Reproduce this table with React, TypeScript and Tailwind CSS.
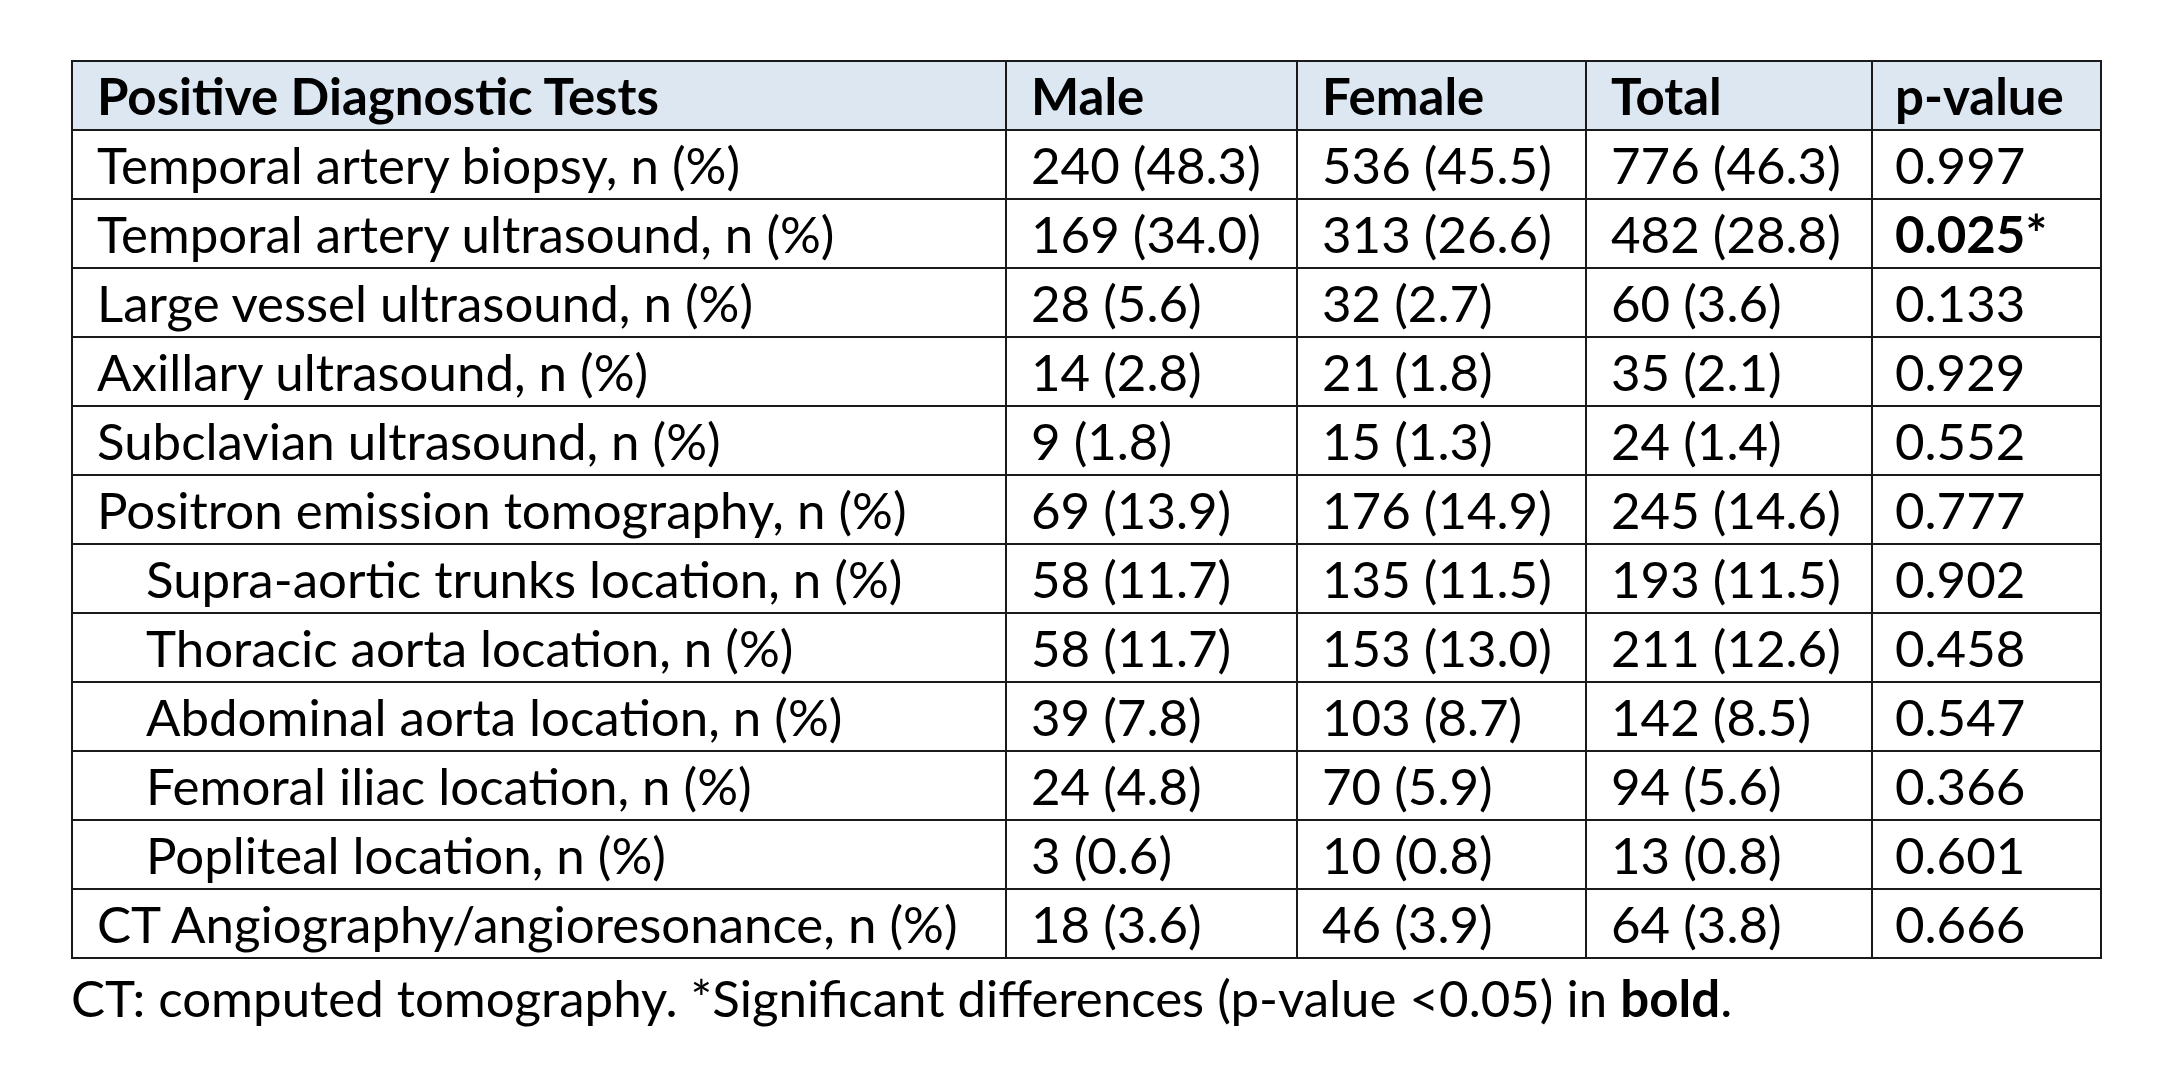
import React from "react";

type Row = { label: string; indent?: boolean; male: string; female: string; total: string; p: string; bold?: boolean };

const rows: Row[] = [
  { label: "Temporal artery biopsy, n (%)", male: "240 (48.3)", female: "536 (45.5)", total: "776 (46.3)", p: "0.997" },
  { label: "Temporal artery ultrasound, n (%)", male: "169 (34.0)", female: "313 (26.6)", total: "482 (28.8)", p: "0.025*", bold: true },
  { label: "Large vessel ultrasound, n (%)", male: "28 (5.6)", female: "32 (2.7)", total: "60 (3.6)", p: "0.133" },
  { label: "Axillary ultrasound, n (%)", male: "14 (2.8)", female: "21 (1.8)", total: "35 (2.1)", p: "0.929" },
  { label: "Subclavian ultrasound, n (%)", male: "9 (1.8)", female: "15 (1.3)", total: "24 (1.4)", p: "0.552" },
  { label: "Positron emission tomography, n (%)", male: "69 (13.9)", female: "176 (14.9)", total: "245 (14.6)", p: "0.777" },
  { label: "Supra-aortic trunks location, n (%)", indent: true, male: "58 (11.7)", female: "135 (11.5)", total: "193 (11.5)", p: "0.902" },
  { label: "Thoracic aorta location, n (%)", indent: true, male: "58 (11.7)", female: "153 (13.0)", total: "211 (12.6)", p: "0.458" },
  { label: "Abdominal aorta location, n (%)", indent: true, male: "39 (7.8)", female: "103 (8.7)", total: "142 (8.5)", p: "0.547" },
  { label: "Femoral iliac location, n (%)", indent: true, male: "24 (4.8)", female: "70 (5.9)", total: "94 (5.6)", p: "0.366" },
  { label: "Popliteal location, n (%)", indent: true, male: "3 (0.6)", female: "10 (0.8)", total: "13 (0.8)", p: "0.601" },
  { label: "CT Angiography/angioresonance, n (%)", male: "18 (3.6)", female: "46 (3.9)", total: "64 (3.8)", p: "0.666" },
];

const cell = "border-2 border-[#1a1a1a] h-[69px] p-0 align-middle whitespace-nowrap leading-[1.2]";

export default function App() {
  return (
    <div
      className="min-h-screen bg-white text-black pt-[60px] pl-[71px] text-[51px]"
      style={{ fontFamily: "Lato, 'Open Sans', sans-serif" }}
    >
      <table className="border-collapse table-fixed w-[2029px]">
        <colgroup>
          <col className="w-[934px]" />
          <col className="w-[291px]" />
          <col className="w-[289px]" />
          <col className="w-[286px]" />
          <col className="w-[229px]" />
        </colgroup>
        <thead>
          <tr className="bg-[#dde7f2] font-bold">
            <th className={`${cell} text-left pl-[24px]`}>Positive Diagnostic Tests</th>
            <th className={`${cell} text-left pl-[24px]`}>Male</th>
            <th className={`${cell} text-left pl-[24px]`}>Female</th>
            <th className={`${cell} text-left pl-[24px]`}>Total</th>
            <th className={`${cell} text-left pl-[22px]`}>p-value</th>
          </tr>
        </thead>
        <tbody>
          {rows.map((r) => (
            <tr key={r.label}>
              <td className={`${cell} ${r.indent ? "pl-[73px]" : "pl-[24px]"}`}>{r.label}</td>
              <td className={`${cell} pl-[24px]`}>{r.male}</td>
              <td className={`${cell} pl-[24px]`}>{r.female}</td>
              <td className={`${cell} pl-[24px]`}>{r.total}</td>
              <td className={`${cell} pl-[22px] ${r.bold ? "font-bold" : ""}`}>{r.p}</td>
            </tr>
          ))}
        </tbody>
      </table>
      <p className="mt-[8px] leading-[1.2]">
        CT: computed tomography. *Significant differences (p-value &lt;0.05) in <span className="font-bold">bold</span>.
      </p>
    </div>
  );
}
